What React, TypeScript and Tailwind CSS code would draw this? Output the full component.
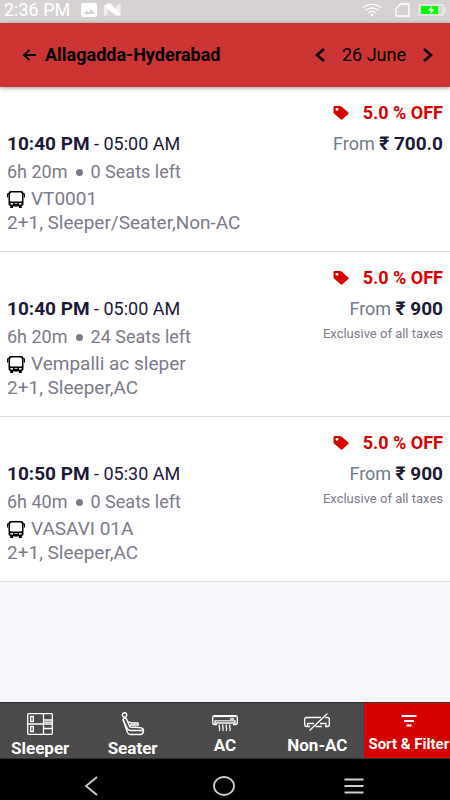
import { ReactNode } from 'react'

type Trip = {
  id: string
  depart: string
  arrive: string
  duration: string
  seats: number
  operator: string
  type: string
  price: string
  taxNote?: string
}

const trips: Trip[] = [
  {
    id: 'vt0001',
    depart: '10:40 PM',
    arrive: '05:00 AM',
    duration: '6h 20m',
    seats: 0,
    operator: 'VT0001',
    type: '2+1, Sleeper/Seater,Non-AC',
    price: '700.0'
  },
  {
    id: 'vempalli',
    depart: '10:40 PM',
    arrive: '05:00 AM',
    duration: '6h 20m',
    seats: 24,
    operator: 'Vempalli ac sleper',
    type: '2+1, Sleeper,AC',
    price: '900',
    taxNote: 'Exclusive of all taxes'
  },
  {
    id: 'vasavi',
    depart: '10:50 PM',
    arrive: '05:30 AM',
    duration: '6h 40m',
    seats: 0,
    operator: 'VASAVI 01A',
    type: '2+1, Sleeper,AC',
    price: '900',
    taxNote: 'Exclusive of all taxes'
  }
]

function StatusBar() {
  return (
    <div className="flex h-[23px] items-center justify-between bg-[#d6d2d1] px-1 pb-1 text-white">
      <div className="flex items-center">
        <span className="text-[18px] leading-5">2:36 PM</span>
        <svg className="ml-[11px] h-[14px] w-4" viewBox="0 0 16 14">
          <rect width="16" height="14" rx="2" fill="currentColor" />
          <path d="M2.5 11 5.5 7.3 7.5 9.5 10.5 6 14 11z" fill="#d6d2d1" />
        </svg>
        <svg className="ml-[6px] h-[14px] w-[18px]" viewBox="0 0 18 14">
          <path d="M1 3 5 .5V11L1 13.500z M13 3 17.500 .5V11L13 12z" fill="#efedec" />
          <path d="M1 3 5.500 .5H7.500L17.500 10.500V12.500H12.500z" fill="currentColor" />
        </svg>
      </div>
      <div className="flex items-center">
        <svg className="h-[14px] w-5" viewBox="0 0 20 14" fill="none" stroke="currentColor" strokeWidth="1.300">
          <path d="M1 4.500C6 .2 14 .2 19 4.500M3.800 7.300C7.500 4 12.500 4 16.200 7.300M6.500 9.800C8.800 8 11.200 8 13.500 9.800" />
          <circle cx="10" cy="12" r="1.300" fill="currentColor" stroke="none" />
        </svg>
        <svg className="ml-[13px] h-[14px] w-[15px]" viewBox="0 0 15 14" fill="none" stroke="currentColor" strokeWidth="1.300">
          <path d="M5.500 1H14V13H1V5.500z" />
        </svg>
        <svg className="ml-2 h-3 w-7" viewBox="0 0 28 12">
          <path d="M0 0H26V3H28V9H26V12H0z" fill="#e6e4e3" />
          <path d="M2 2H24V10H2z" fill="#d6d2d1" />
          <path d="M3 2H20V10H3z" fill="#00ff00" />
          <path d="M14 1.500 10 6.500H12.800L12 10.500 16.500 5.500H13.500z" fill="white" />
        </svg>
      </div>
    </div>
  )
}

function Header() {
  return (
    <header className="relative flex h-16 items-center justify-between bg-[#cd3434] pl-[22px] pr-4 text-black shadow-[0_1px_4px_rgba(0,0,0,0.4)]">
      <div className="flex items-center gap-2">
        <button type="button" aria-label="Back">
          <svg className="h-[14px] w-[15px]" viewBox="0 0 15 14" fill="none" stroke="currentColor" strokeWidth="1.900">
            <path d="M14 7H2M7.500 2 2 7 7.500 12" />
          </svg>
        </button>
        <h1 className="text-[18px] font-bold leading-6">Allagadda-Hyderabad</h1>
      </div>
      <div className="flex items-center">
        <button type="button" aria-label="Previous day">
          <svg className="h-[14px] w-3" viewBox="0 0 12 14" fill="none" stroke="currentColor" strokeWidth="2.500">
            <path d="M10 1 3 7 10 13" />
          </svg>
        </button>
        <span className="mx-4 text-[18px] leading-6">26 June</span>
        <button type="button" aria-label="Next day">
          <svg className="h-[14px] w-3" viewBox="0 0 12 14" fill="none" stroke="currentColor" strokeWidth="2.500">
            <path d="M2 1 9 7 2 13" />
          </svg>
        </button>
      </div>
    </header>
  )
}

function BusIcon() {
  return (
    <svg className="h-[17px] w-[18px]" viewBox="0 0 18 17" fill="black">
      <path
        fillRule="evenodd"
        d="M4 0H14Q16.500 0 16.500 2V13Q16.500 15 14.800 15V17H12V15.500H6V17H3.200V15Q1.500 15 1.500 13V2Q1.500 0 4 0z M4.500 1.500Q3 2 3 3.500V9.500Q3 10.500 4.500 10.500H13.500Q15 10.500 15 9.500V3.500Q15 2 13.500 1.500z M3.500 12V13.500H6V12z M7.500 12.300V13H10.500V12.300z M12 12V13.500H14.500V12z"
      />
      <path d="M0 3Q0 2 2 2V3.200H1.200V6.500H0z M18 3Q18 2 16 2V3.200H16.800V6.500H18z" />
    </svg>
  )
}

function TagIcon() {
  return (
    <svg className="h-[14px] w-4" viewBox="0 0 16 14" fill="#d60000">
      <path
        fillRule="evenodd"
        d="M1.500 0H7Q8 0 8.800.7L15.300 6.500Q16 7.300 15.300 8L9.500 13.300Q8.500 14 7.600 13.300L1.300 7.700Q.5 7 .5 6V1Q.5 0 1.500 0z M4 1.900A1.500 1.400 0 1 0 4 4.700A1.500 1.400 0 1 0 4 1.900z"
      />
    </svg>
  )
}

function TripCard({ trip }: { trip: Trip }) {
  return (
    <li className="border-b border-[#dedfe1] bg-white px-[7px] pb-4 pt-[13px]">
      <div className="flex h-[26px] items-center justify-end gap-[14px]">
        <TagIcon />
        <span className="text-[18px] font-bold leading-6 text-[#d60000]">5.0 % OFF</span>
      </div>
      <div className="mt-1 flex justify-between">
        <div className="text-[19px] text-[#7c7a8a]">
          <p className="text-[18px] leading-7 text-[#1b1838]">
            <strong className="text-[19px] font-bold">{trip.depart}</strong> - {trip.arrive}
          </p>
          <p className="flex items-center text-[18px] leading-7">
            {trip.duration}
            <span className="mx-2 size-[7px] rounded-full bg-[#7c7a8a]" />
            {trip.seats} Seats left
          </p>
          <p className="mt-[1px] flex items-center gap-[6px] leading-6">
            <BusIcon />
            {trip.operator}
          </p>
          <p className="leading-6">{trip.type}</p>
        </div>
        <div className="text-right">
          <p className="text-[18px] leading-7 text-[#6f7b8d]">
            From <strong className="text-[19px] font-bold text-[#1b1838]">₹ {trip.price}</strong>
          </p>
          {trip.taxNote && <p className="text-[13px] leading-[22px] text-[#7c7a8a]">{trip.taxNote}</p>}
        </div>
      </div>
    </li>
  )
}

function SleeperIcon() {
  return (
    <svg className="h-[22px] w-[26px]" viewBox="0 0 26 22" fill="none" stroke="white" strokeWidth="1.300">
      <rect x=".7" y=".7" width="24.600" height="20.600" rx=".8" />
      <path d="M.6 11H25.400M16.500 .6V21.400M16.500 7H25.400M16.500 9.200H25.400M16.500 15.500H25.400" />
      <rect x="3.700" y="3.500" width="2.600" height="5" />
      <rect x="3.700" y="13.500" width="2.600" height="5" />
    </svg>
  )
}

function SeaterIcon() {
  return (
    <svg className="h-6 w-6" viewBox="0 0 24 24" fill="none" stroke="white" strokeWidth="1.400" strokeLinejoin="round">
      <ellipse cx="3.500" cy="3" rx="2.200" ry="2.300" />
      <path d="M2 7.500Q3.500 5 5.500 7L9 15 18.500 15.500Q22.500 16 22.500 18.500H10Q7.500 18.500 6.500 17z" />
      <path d="M7.500 9.500 10 11H16.500Q18 11.500 17 13H9M2 7.500 6.500 20.500Q7.500 22.500 9.500 22.500H19.500Q22.500 22 22.500 18.500" />
    </svg>
  )
}

function AcIcon() {
  return (
    <svg className="h-[17px] w-[26px]" viewBox="0 0 26 17" fill="none" stroke="white" strokeWidth="1.300">
      <path d="M5 9.500H2.500Q.7 9.500 .7 7.500V2.500Q.7 .7 2.500 .7H23.500Q25.300 .7 25.300 2.500V7.500Q25.300 9.500 23.500 9.500H21" />
      <path d="M2 1.500H24" />
      <path d="M3 8V5.800H23V8z" fill="#222" />
      <path d="M18 4H22M7.500 9.500C6 12 9 13 7.200 16M11 9.500C9.500 12 12.500 13 10.700 16M14.500 9.500C13 12 16 13 14.200 16M18 9.500C16.500 12 19.500 13 17.700 16" />
    </svg>
  )
}

function NonAcIcon() {
  return (
    <svg className="h-[18px] w-[26px]" viewBox="0 0 26 18" fill="none" stroke="white" strokeWidth="1.300">
      <path d="M6 13.500H2.500Q.7 13.500 .7 11.500V6.500Q.7 4.500 2.500 4.500H17M21 4.500H23.500Q25.300 4.500 25.300 6.500V11.500Q25.300 13.500 23.500 13.500H21" />
      <path d="M3.500 13V10.500H10M16 10.500H22V13M11.500 13.500H18M5.500 17.500 23.500 .5" />
    </svg>
  )
}

function FilterIcon() {
  return (
    <svg className="h-3 w-4" viewBox="0 0 16 12" fill="none" stroke="white" strokeWidth="2">
      <path d="M.5 1H15.500M3 6H13M5.500 10.500H10.500" />
    </svg>
  )
}

function Tab({ label, icon }: { label: string; icon: ReactNode }) {
  return (
    <button type="button" className="flex flex-col items-center pt-[9px]">
      <span className="flex h-6 items-center">{icon}</span>
      <span className="text-[17px] font-bold leading-6">{label}</span>
    </button>
  )
}

function FilterBar() {
  return (
    <div className="overflow-hidden border-y border-[#2e2e2e] bg-[#4a4a4a] text-white">
      {/* the row runs slightly past both edges of the screen */}
      <div className="-mx-[6px] grid h-[55px] grid-cols-5">
        <Tab label="Sleeper" icon={<SleeperIcon />} />
        <Tab label="Seater" icon={<SeaterIcon />} />
        <button type="button" className="flex flex-col items-center pt-3">
          <AcIcon />
          <span className="mt-[1px] text-[17px] font-bold leading-6">AC</span>
        </button>
        <button type="button" className="flex flex-col items-center pt-[10px]">
          <NonAcIcon />
          <span className="mt-[2px] text-[17px] font-bold leading-6">Non-AC</span>
        </button>
        <button type="button" className="flex flex-col items-center bg-[#d60000] pr-[2px] pt-3">
          <FilterIcon />
          <span className="mt-[5px] whitespace-nowrap text-[15px] font-bold leading-6">Sort & Filter</span>
        </button>
      </div>
    </div>
  )
}

function SystemNav() {
  return (
    <nav className="grid h-[41px] grid-cols-[1fr_auto_1fr] items-center bg-black pl-[84px] pr-[86px] pt-3 text-[#cfcfcf]">
      <button type="button" aria-label="Back" className="justify-self-start">
        <svg className="h-5 w-[14px]" viewBox="0 0 14 20" fill="none" stroke="currentColor" strokeWidth="1.800">
          <path d="M13 1 2 10 13 19" />
        </svg>
      </button>
      <button type="button" aria-label="Home">
        <svg className="h-5 w-[22px]" viewBox="0 0 22 20" fill="none" stroke="currentColor" strokeWidth="1.800">
          <ellipse cx="11" cy="10" rx="10" ry="9" />
        </svg>
      </button>
      <button type="button" aria-label="Recent apps" className="justify-self-end">
        <svg className="h-4 w-5" viewBox="0 0 20 16" fill="none" stroke="currentColor" strokeWidth="2">
          <path d="M.5 1.500H19.500M.5 8H19.500M.5 14.500H19.500" />
        </svg>
      </button>
    </nav>
  )
}

export default function App() {
  return (
    <div className="flex min-h-screen flex-col bg-[#f7f8fb] font-[Roboto,'Liberation_Sans',sans-serif]">
      <StatusBar />
      <Header />
      <main className="flex-1">
        <ul>
          {trips.map((trip) => (
            <TripCard key={trip.id} trip={trip} />
          ))}
        </ul>
      </main>
      <footer>
        <FilterBar />
        <SystemNav />
      </footer>
    </div>
  )
}
